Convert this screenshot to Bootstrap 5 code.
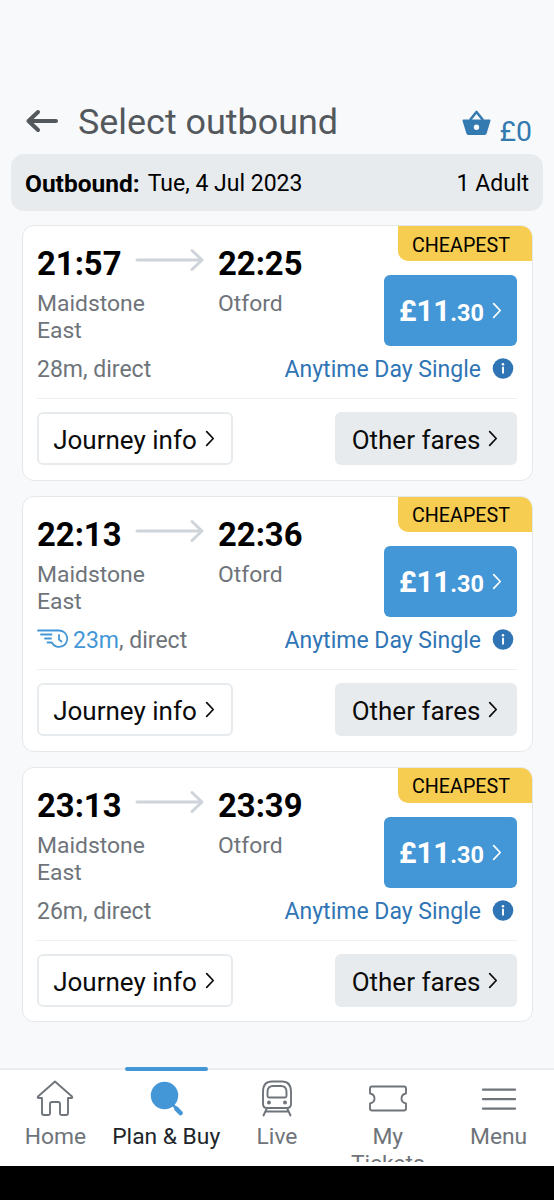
<!DOCTYPE html>
<html lang="en">
<head>
<meta charset="utf-8">
<meta name="viewport" content="width=device-width, initial-scale=1">
<title>Select outbound</title>
<link href="https://cdn.jsdelivr.net/npm/bootstrap@5.3.0/dist/css/bootstrap.min.css" rel="stylesheet">
<style>
body{font-family:Roboto,"Liberation Sans",sans-serif;background:#f8f9fb;color:#000;height:1200px;overflow:hidden;font-size:23px;line-height:27px}
.icn{fill:none;stroke:currentColor;stroke-linecap:round;stroke-linejoin:round;display:block;flex:none}
.top-bar{height:154px;padding:0 22px 0 25px}
.top-title{font-size:35.9px;line-height:44px;font-weight:400;color:#53585d;margin:0 0 10px 19px}
.arrow-back{color:#53585d;margin-bottom:17px}
.basket{color:#337ab1}
.basket svg{margin:0 9px 17px 0}
.basket-sum{font-size:28.4px;line-height:32px;margin-bottom:6px}
.trip-bar{height:57px;margin:0 11px 14px;padding:2px 14px 0;background:#e8ebee;border-radius:13px;font-size:23px}
.trip-bar strong{font-weight:700;font-size:24.5px;margin-right:8px}
.fares{gap:15px;padding:0 21.500px}
.fare{height:255.8px;border:1px solid #e5e8eb;border-radius:12px;padding:0 14.500px;background:#fff;overflow:hidden}
.fare-top{height:128px}
.clock{font-size:32.8px;line-height:40px;font-weight:700;padding-top:18px}
.place{color:#6e747a;padding-top:6px;font-size:22.9px}
.stop-from{width:181px}
.long-arrow{color:#ced4da;margin:10px 0 0 13px}
.tag{width:134px;height:35px;margin-right:-14.500px;background:#f6cd50;border-bottom-left-radius:10px;font-size:19.7px;padding:3px 7px 0 0}
.btn-price{width:133px;height:71px;margin-top:14px;background:#4497d6;color:#fff;border:0;border-radius:6px;padding:0;font-weight:700}
.btn-price:hover{background:#3a8aca;color:#fff}
.btn-price span{line-height:34px}
.price{padding-top:6px}
.pounds{font-size:29.5px}.pence{font-size:23.5px}
.info-row{height:44px;color:#6e747a;padding-top:2px}
.fare-name{color:#2f75b5}
.fare-name svg{margin:2px 0 0 8px}
.quick{color:#4497d6}
.fare-btns{border-top:1px solid #eef0f2;padding-top:13px}
.btn-line{height:53px;border-radius:6px;font-size:26px;line-height:30px;color:#0b0b0b;padding:3px 2px 0 0}
.btn-journey{width:196px;border:2px solid #e8ebee;background:#fff}
.btn-other{width:182px;border:0;background:#e8ebee}
.btn-line svg{margin:0 0 3px 8px}
.tabs{height:98px;background:#fff;border-top:2px solid #ebedf0}
.tab-item{width:20%;color:#6e747a;font-size:22.8px;line-height:27px;height:92px;overflow:hidden;text-decoration:none}
.tab-item svg{height:40px;margin-top:9px;margin-bottom:4px}
.tab-item.active{color:#212529;position:relative;overflow:visible}
.tab-item.active::before{content:"";position:absolute;top:-3px;left:14px;width:83px;height:4px;border-radius:2px;background:#4497d6}
.sys-bar{height:34px;background:#000}
</style>
<script src="https://cdn.jsdelivr.net/npm/bootstrap@5.3.0/dist/js/bootstrap.bundle.min.js"></script>
</head>
<body class="d-flex flex-column">
<svg width="0" height="0" class="position-absolute" aria-hidden="true">
  <symbol id="chev" viewBox="0 0 10 18"><path d="M1.500 1.800 8.400 9 1.500 16.200"/></symbol>
  <symbol id="long" viewBox="0 0 70 24"><path d="M2 12H67M57 2.500 67 12 57 21.500"/></symbol>
  <symbol id="info" viewBox="0 0 22 22"><circle cx="11" cy="11" r="10.800" fill="#2f75b5" stroke="none"/><circle cx="11" cy="6.600" r="1.300" fill="#fff" stroke="none"/><path d="M11 10V15.500" stroke="#fff" stroke-width="2"/></symbol>
</svg>

<header class="top-bar d-flex align-items-end">
  <svg class="icn arrow-back" width="34" height="32" viewBox="0 0 34 32" stroke-width="4"><path d="M31 16H3.500M13 7 3.500 16 13 25"/></svg>
  <h1 class="top-title">Select outbound</h1>
  <a href="#" class="basket d-flex align-items-end ms-auto text-decoration-none">
    <svg width="29" height="27" viewBox="0 0 29 27"><path d="M8 10 14.500 2 21 10" fill="none" stroke="currentColor" stroke-width="2.600" stroke-linejoin="round"/><path fill="currentColor" fill-rule="evenodd" d="M1.500 9.500H27.500Q28.800 9.500 28.500 10.800L24.600 23.600Q24.200 25 22.700 25H6.300Q4.800 25 4.400 23.600L.5 10.800Q.2 9.500 1.500 9.500ZM14.500 14.500a2.700 2.700 0 1 0 0 5.400 2.700 2.700 0 0 0 0-5.400Z"/></svg>
    <span class="basket-sum">£0</span>
  </a>
</header>

<div class="trip-bar d-flex align-items-center">
  <strong>Outbound:</strong><span>Tue, 4 Jul 2023</span><span class="ms-auto">1 Adult</span>
</div>

<main class="fares d-flex flex-column">
  <article class="fare">
    <div class="fare-top d-flex">
      <div class="stop-from">
        <div class="d-flex"><div class="clock">21:57</div><svg class="icn long-arrow align-self-center" width="70" height="24" stroke-width="3"><use href="#long"/></svg></div>
        <div class="place">Maidstone<br>East</div>
      </div>
      <div><div class="clock">22:25</div><div class="place">Otford</div></div>
      <div class="ms-auto d-flex flex-column align-items-end">
        <div class="tag d-flex align-items-center justify-content-center">CHEAPEST</div>
        <button class="btn btn-price d-flex align-items-center justify-content-center"><span class="price"><span class="pounds">£11</span><span class="pence">.30</span></span><svg class="icn ms-2" width="10" height="17" stroke-width="1.800"><use href="#chev"/></svg></button>
      </div>
    </div>
    <div class="info-row d-flex justify-content-between">
      <span>28m, direct</span>
      <span class="fare-name d-flex">Anytime Day Single<svg class="icn" width="28" height="21"><use href="#info"/></svg></span>
    </div>
    <div class="fare-btns d-flex justify-content-between">
      <button class="btn btn-line btn-journey d-flex justify-content-center align-items-center">Journey info<svg class="icn" width="10" height="17" stroke-width="1.800"><use href="#chev"/></svg></button>
      <button class="btn btn-line btn-other d-flex justify-content-center align-items-center">Other fares<svg class="icn" width="10" height="17" stroke-width="1.800"><use href="#chev"/></svg></button>
    </div>
  </article>

  <article class="fare">
    <div class="fare-top d-flex">
      <div class="stop-from">
        <div class="d-flex"><div class="clock">22:13</div><svg class="icn long-arrow align-self-center" width="70" height="24" stroke-width="3"><use href="#long"/></svg></div>
        <div class="place">Maidstone<br>East</div>
      </div>
      <div><div class="clock">22:36</div><div class="place">Otford</div></div>
      <div class="ms-auto d-flex flex-column align-items-end">
        <div class="tag d-flex align-items-center justify-content-center">CHEAPEST</div>
        <button class="btn btn-price d-flex align-items-center justify-content-center"><span class="price"><span class="pounds">£11</span><span class="pence">.30</span></span><svg class="icn ms-2" width="10" height="17" stroke-width="1.800"><use href="#chev"/></svg></button>
      </div>
    </div>
    <div class="info-row d-flex justify-content-between">
      <span class="d-flex"><svg class="icn quick me-1" width="32" height="24" viewBox="0 0 32 24" stroke-width="1.800"><path d="M1 3.500H22A8.200 8.200 0 1 1 14.800 15.500H10.500M4 7.500H14.500M8 11.500H14M22 8V12.500L24.500 14.500"/></svg><span><span class="quick">23m</span>, direct</span></span>
      <span class="fare-name d-flex">Anytime Day Single<svg class="icn" width="28" height="21"><use href="#info"/></svg></span>
    </div>
    <div class="fare-btns d-flex justify-content-between">
      <button class="btn btn-line btn-journey d-flex justify-content-center align-items-center">Journey info<svg class="icn" width="10" height="17" stroke-width="1.800"><use href="#chev"/></svg></button>
      <button class="btn btn-line btn-other d-flex justify-content-center align-items-center">Other fares<svg class="icn" width="10" height="17" stroke-width="1.800"><use href="#chev"/></svg></button>
    </div>
  </article>

  <article class="fare">
    <div class="fare-top d-flex">
      <div class="stop-from">
        <div class="d-flex"><div class="clock">23:13</div><svg class="icn long-arrow align-self-center" width="70" height="24" stroke-width="3"><use href="#long"/></svg></div>
        <div class="place">Maidstone<br>East</div>
      </div>
      <div><div class="clock">23:39</div><div class="place">Otford</div></div>
      <div class="ms-auto d-flex flex-column align-items-end">
        <div class="tag d-flex align-items-center justify-content-center">CHEAPEST</div>
        <button class="btn btn-price d-flex align-items-center justify-content-center"><span class="price"><span class="pounds">£11</span><span class="pence">.30</span></span><svg class="icn ms-2" width="10" height="17" stroke-width="1.800"><use href="#chev"/></svg></button>
      </div>
    </div>
    <div class="info-row d-flex justify-content-between">
      <span>26m, direct</span>
      <span class="fare-name d-flex">Anytime Day Single<svg class="icn" width="28" height="21"><use href="#info"/></svg></span>
    </div>
    <div class="fare-btns d-flex justify-content-between">
      <button class="btn btn-line btn-journey d-flex justify-content-center align-items-center">Journey info<svg class="icn" width="10" height="17" stroke-width="1.800"><use href="#chev"/></svg></button>
      <button class="btn btn-line btn-other d-flex justify-content-center align-items-center">Other fares<svg class="icn" width="10" height="17" stroke-width="1.800"><use href="#chev"/></svg></button>
    </div>
  </article>
</main>

<nav class="tabs d-flex mt-auto">
  <a href="#" class="tab-item d-flex flex-column align-items-center text-center">
    <svg class="icn" width="38" viewBox="0 0 38 40" stroke-width="1.900"><path d="M19 2.500 2 17.500Q1 19 2.800 19H6V34Q6 36 8 36H12.500Q14 36 14 34.500V25Q14 23 16 23H22Q24 23 24 25V34.500Q24 36 25.500 36H30Q32 36 32 34V19H35.200Q37 19 36 17.500Z"/></svg>
    <span>Home</span></a>
  <a href="#" class="tab-item active d-flex flex-column align-items-center text-center">
    <svg class="icn" width="34" viewBox="0 0 34 40"><circle cx="15.500" cy="16.500" r="13.700" fill="#4497d6" stroke="none"/><path d="M24.500 26.500 27 29" stroke="#4497d6" stroke-width="2.500"/><path d="M27.500 29.800 31.500 34" stroke="#4497d6" stroke-width="4.600"/></svg>
    <span class="text-nowrap">Plan &amp; Buy</span></a>
  <a href="#" class="tab-item d-flex flex-column align-items-center text-center">
    <svg class="icn" width="34" viewBox="0 0 34 40" stroke-width="1.900"><path d="M3 13Q3 2.500 12 2.500H22Q31 2.500 31 13V25Q31 29 27 29H7Q3 29 3 25ZM7.500 17V13Q7.500 7 13 7H21Q26.500 7 26.500 13V17Q26.500 18.500 25 18.500H9Q7.500 18.500 7.500 17ZM7 29 3.500 36.500M27 29 30.500 36.500M6 32.500H28"/><circle cx="9" cy="23.500" r="1" fill="currentColor"/><circle cx="25" cy="23.500" r="1" fill="currentColor"/></svg>
    <span>Live</span></a>
  <a href="#" class="tab-item d-flex flex-column align-items-center text-center">
    <svg class="icn" width="38" viewBox="0 0 38 40" stroke-width="1.900"><path d="M3 7.500H35Q37 7.500 37 9.500V14.500Q32.500 15.500 32.500 19.500T37 24.500V29.500Q37 31.500 35 31.500H3Q1 31.500 1 29.500V24.500Q5.500 23.500 5.500 19.500T1 14.500V9.500Q1 7.500 3 7.500Z"/></svg>
    <span>My<br>Tickets</span></a>
  <a href="#" class="tab-item d-flex flex-column align-items-center text-center">
    <svg class="icn" width="36" viewBox="0 0 36 40" stroke-width="2.300"><path d="M2 10.700H34M2 20.200H34M2 29.700H34"/></svg>
    <span>Menu</span></a>
</nav>
<div class="sys-bar flex-shrink-0"></div>
</body>
</html>
